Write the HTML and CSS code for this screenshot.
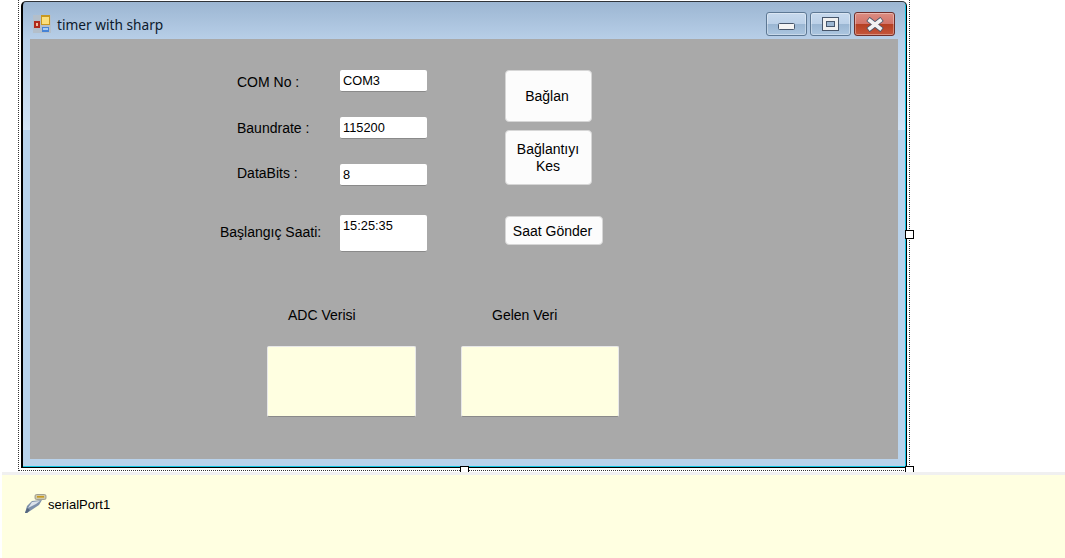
FILE: index.html
```html
<!DOCTYPE html>
<html lang="tr">
<head>
    <meta charset="UTF-8">
    <meta name="viewport" content="width=device-width, initial-scale=1.0">
    <title>timer with sharp</title>
    <link rel="stylesheet" href="styles.css">
</head>
<body>
    <div class="designer">
        <div class="selection">
            <div class="window">
                <div class="titlebar">
                    <svg class="app-icon" width="18" height="18" viewBox="0 0 18 18">
                        <rect x="0" y="0" width="18" height="18" fill="#b4bfca"/>
                        <rect x="1" y="6" width="6" height="7" fill="#b02a1c"/>
                        <rect x="3" y="8" width="2" height="3" fill="#f0c0a0"/>
                        <rect x="8" y="0" width="9" height="10" fill="#c9981f"/>
                        <rect x="9" y="2" width="7" height="7" fill="#fbdf7c"/>
                        <rect x="9" y="12" width="7" height="5" fill="#4683d6"/>
                        <rect x="10" y="13" width="5" height="2" fill="#a8cdf5"/>
                    </svg>
                    <span class="title-text">timer with sharp</span>
                    <div class="win-buttons">
                        <div class="win-btn win-min">
                            <svg width="17" height="7" viewBox="0 0 17 7"><rect x="0.5" y="0.5" width="16" height="6" rx="1" fill="#f4f4f4" stroke="#47566b"/></svg>
                        </div>
                        <div class="win-btn">
                            <svg width="17" height="14" viewBox="0 0 17 14"><rect x="0.5" y="0.5" width="16" height="13" fill="#f0f0f0" stroke="#47566b"/><rect x="4.5" y="4.5" width="8" height="5" fill="#9db7d2" stroke="#47566b"/></svg>
                        </div>
                        <div class="win-btn win-close">
                            <svg width="20" height="15" viewBox="0 0 20 15"><path d="M3 2 L17 13 M17 2 L3 13" stroke="#47566b" stroke-width="5.4"/><path d="M3.5 2.5 L16.5 12.5 M16.5 2.5 L3.5 12.5" stroke="#f2f2f2" stroke-width="3.6"/></svg>
                        </div>
                    </div>
                </div>
                <div class="form-area">
                    <div class="top-section">
                        <div class="fields">
                            <div class="field">
                                <label class="lbl lbl-com">COM No :</label>
                                <div class="txt">COM3</div>
                            </div>
                            <div class="field">
                                <label class="lbl lbl-baud">Baundrate :</label>
                                <div class="txt">115200</div>
                            </div>
                            <div class="field">
                                <label class="lbl lbl-data">DataBits :</label>
                                <div class="txt">8</div>
                            </div>
                            <div class="field field-multi">
                                <label class="lbl lbl-start">Başlangıç Saati:</label>
                                <div class="txt txt-multi">15:25:35</div>
                            </div>
                        </div>
                        <div class="actions">
                            <button class="btn btn-connect">Bağlan</button>
                            <button class="btn btn-disconnect">Bağlantıyı<br>Kes</button>
                            <button class="btn btn-send">Saat Gönder</button>
                        </div>
                    </div>
                    <div class="data-section">
                        <div class="data-col data-adc">
                            <div class="data-label">ADC Verisi</div>
                            <div class="data-box"></div>
                        </div>
                        <div class="data-col data-rx">
                            <div class="data-label">Gelen Veri</div>
                            <div class="data-box"></div>
                        </div>
                    </div>
                </div>
            </div>
            <span class="handle handle-right"></span>
            <span class="handle handle-bottom"></span>
            <span class="handle handle-corner"></span>
        </div>
    </div>
    <div class="tray">
        <div class="tray-item">
            <svg width="22" height="20" viewBox="0 0 22 20">
                <rect x="10" y="0.5" width="11" height="5" rx="1.5" fill="#cfc9a8" stroke="#8f8f86" stroke-width="0.8"/>
                <rect x="12" y="2" width="7" height="1.6" fill="#c99a1e"/>
                <path d="M7 7 L17 6 L14 11 L8 15 L2 19 L0 19 L2 12 Z" fill="#7d90aa"/>
                <path d="M7 8 L15 7 L11 10 L3 14 Z" fill="#dbe2ea"/>
                <path d="M0 19 L2 14 L5 16 L2 19 Z" fill="#56677f"/>
            </svg>
            <span>serialPort1</span>
        </div>
    </div>
</body>
</html>
```

FILE: styles.css
```css
html, body {
    margin: 0;
    padding: 0;
}
body {
    width: 1065px;
    height: 558px;
    overflow: hidden;
    background-color: #ffffff;
    font-family: "Liberation Sans", Arial, sans-serif;
    font-size: 14px;
    color: #000000;
}
.designer {
    height: 472px;
    padding-left: 18px;
    box-sizing: border-box;
}
.selection {
    position: relative;
    width: 892px;
    height: 471px;
    box-sizing: border-box;
    border-right: 1px dotted #333333;
    border-bottom: 1px dotted #333333;
    border-left: 1px dotted #333333;
    padding: 1px 0 0 2px;
}
.window {
    width: 886px;
    height: 467px;
    box-sizing: border-box;
    border-top: 1px solid #2f3338;
    border-right: 1px solid #000000;
    border-bottom: 1px solid #000000;
    border-left: 2px solid #000000;
    border-radius: 5px 5px 0 0;
    background: linear-gradient(#9cb6d2 0, #b8cfe8 38px, #cfe1f4 120px, #d3e4f6 128px, #b9d3ec 128px, #b9d3ec 100%);
    box-shadow: inset -1px -1px 0 #12c4e2;
}
.titlebar {
    display: flex;
    align-items: flex-start;
    height: 37px;
    padding: 0 10px;
    box-sizing: border-box;
}
.app-icon {
    flex: none;
    margin-top: 13px;
}
.title-text {
    margin: 13px 0 0 6px;
    line-height: 20px;
    font-family: "Noto Sans", sans-serif;
    font-size: 13.7px;
    color: #0c1a2c;
}
.win-buttons {
    display: flex;
    gap: 3px;
    margin: 10px 1px 0 auto;
}
.win-btn {
    display: flex;
    align-items: center;
    justify-content: center;
    width: 41px;
    height: 24px;
    box-sizing: border-box;
    border: 1px solid #5d7894;
    border-radius: 3px;
    background: linear-gradient(#c7d9ed 0, #bcd1e8 48%, #9ab6d2 50%, #acc6e0 100%);
    box-shadow: inset 0 0 0 1px rgba(255, 255, 255, 0.35);
}
.win-min {
    padding-top: 4px;
}
.win-close {
    border-color: #6e2e2a;
    background: linear-gradient(#dc8d82 0, #d2746a 48%, #b53f22 50%, #c4563c 100%);
}
.form-area {
    width: 868px;
    height: 420px;
    margin-left: 7px;
    box-sizing: border-box;
    padding: 31px 0 0 190px;
    background-color: #a9a9a9;
}
.top-section {
    display: flex;
    gap: 78px;
    height: 238px;
}
.fields {
    display: flex;
    flex-direction: column;
    gap: 25px;
    width: 207px;
}
.field {
    display: flex;
    align-items: center;
    height: 22px;
}
.field-multi {
    height: 37px;
    margin-top: 4px;
}
.lbl {
    width: 120px;
    flex: none;
    box-sizing: border-box;
}
.lbl-com {
    padding-left: 17px;
    padding-top: 2px;
}
.lbl-baud {
    padding-left: 17px;
}
.lbl-data {
    padding-left: 17px;
    padding-bottom: 5px;
}
.lbl-start {
    padding-bottom: 4px;
}
.txt {
    width: 87px;
    height: 22px;
    line-height: 22px;
    box-sizing: border-box;
    padding-left: 3px;
    font-size: 12.8px;
    background-color: #ffffff;
    border-radius: 2px;
    border-bottom: 1px solid #8a8a8a;
}
.txt-multi {
    height: 37px;
}
.actions {
    display: flex;
    flex-direction: column;
    align-items: flex-start;
}
.btn {
    width: 87px;
    padding: 0;
    font-family: "Liberation Sans", Arial, sans-serif;
    font-size: 14px;
    line-height: 17px;
    color: #000000;
    background-color: #fcfcfc;
    border: 1px solid #d6d6d6;
    border-radius: 4px;
}
.btn-connect {
    height: 52px;
    padding-right: 3px;
}
.btn-disconnect {
    height: 55px;
    margin-top: 8px;
    padding-right: 1px;
}
.btn-send {
    width: 98px;
    height: 29px;
    margin-top: 31px;
    padding: 2px 3px 0 0;
}
.data-section {
    display: flex;
    gap: 45px;
    margin-left: 47px;
}
.data-label {
    height: 38px;
    line-height: 15px;
}
.data-adc .data-label {
    padding-left: 21px;
}
.data-rx .data-label {
    padding-left: 31px;
}
.data-box {
    height: 71px;
    box-sizing: border-box;
    background-color: #ffffe1;
    border: 1px solid #e8e8e8;
    border-bottom-color: #8a8a8a;
    border-radius: 2px;
}
.data-adc {
    width: 149px;
}
.data-rx {
    width: 158px;
}
.handle {
    position: absolute;
    width: 7px;
    height: 7px;
    background-color: #ffffff;
    border: 1px solid #000000;
}
.handle-right {
    left: 886px;
    top: 230px;
}
.handle-bottom,
.handle-corner {
    top: 466px;
    height: 5px;
    border-bottom: none;
}
.handle-bottom {
    left: 441px;
}
.handle-corner {
    left: 886px;
}
.tray {
    height: 86px;
    margin-left: 2px;
    box-sizing: border-box;
    background-color: #ffffe1;
    border-top: 3px solid #f0f0f0;
    padding: 19px 0 0 23px;
}
.tray-item {
    display: flex;
    align-items: center;
    gap: 1px;
    font-size: 13px;
}
```
